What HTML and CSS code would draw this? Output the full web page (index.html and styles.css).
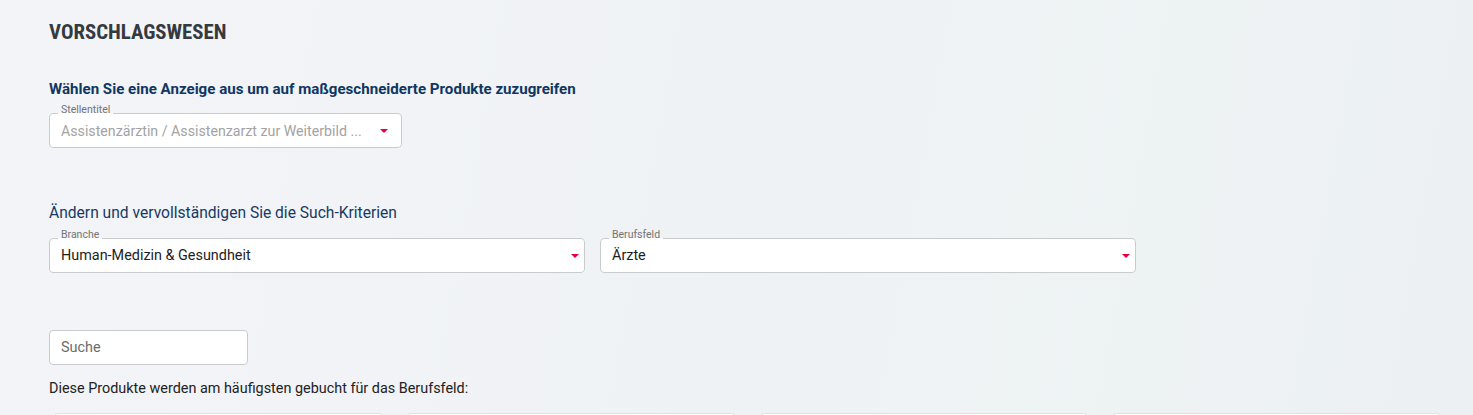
FILE: index.html
```html
<!DOCTYPE html>
<html lang="de">
<head>
<meta charset="utf-8">
<title>Vorschlagswesen</title>
<link rel="stylesheet" href="styles.css">
</head>
<body>
<main class="page">
  <h1 class="title">VORSCHLAGSWESEN</h1>

  <p class="lead">Wählen Sie eine Anzeige aus um auf maßgeschneiderte Produkte zuzugreifen</p>
  <fieldset class="select select-ad">
    <legend class="select-label">Stellentitel</legend>
    <div class="select-row">
      <span class="select-value is-disabled">Assistenzärztin / Assistenzarzt zur Weiterbild ...</span>
      <span class="caret"></span>
    </div>
  </fieldset>

  <p class="sub">Ändern und vervollständigen Sie die Such-Kriterien</p>
  <div class="criteria">
    <fieldset class="select select-wide">
      <legend class="select-label">Branche</legend>
      <div class="select-row">
        <span class="select-value">Human-Medizin &amp; Gesundheit</span>
        <span class="caret"></span>
      </div>
    </fieldset>
    <fieldset class="select select-wide">
      <legend class="select-label">Berufsfeld</legend>
      <div class="select-row">
        <span class="select-value">Ärzte</span>
        <span class="caret"></span>
      </div>
    </fieldset>
  </div>

  <div class="search">
    <input class="search-input" type="text" placeholder="Suche">
  </div>

  <p class="note">Diese Produkte werden am häufigsten gebucht für das Berufsfeld:</p>

  <div class="cards">
    <div class="card"></div>
    <div class="card"></div>
    <div class="card"></div>
    <div class="card"></div>
  </div>
</main>
</body>
</html>
```

FILE: styles.css
```css
html, body {
  margin: 0;
  padding: 0;
}
body {
  font-family: Roboto, "Liberation Sans", Arial, sans-serif;
  font-size: 14px;
  color: #222;
  height: 415px;
  background: linear-gradient(100deg, #f3f4f7 0%, #f1f3f6 30%, #eef2f4 55%, #eef3f4 70%, #ecf0f3 100%);
  overflow: hidden;
}
.page {
  padding: 18px 49px 0 49px;
  height: 415px;
  box-sizing: border-box;
  overflow: hidden;
}
.title {
  margin: 0;
  font-size: 20.8px;
  line-height: 28px;
  font-weight: 700;
  font-stretch: condensed;
  color: #343a40;
}
.lead {
  margin: 34px 0 0 0;
  font-size: 15.1px;
  line-height: 18px;
  font-weight: 700;
  color: #0f3763;
}
.select {
  margin: 0;
  padding: 0 13px 0 11px;
  border: 1px solid #c9cbcd;
  border-radius: 4px;
  background: #fff;
  box-sizing: border-box;
  min-width: 0;
}
.select-label {
  margin-left: -3px;
  padding: 0 3px 6px 3px;
  font-size: 10.5px;
  line-height: 10px;
  color: #757575;
}
.select-ad {
  width: 353px;
  margin-top: 7px;
}
.select-wide {
  padding-right: 5px;
}
.select-row {
  display: flex;
  align-items: center;
  justify-content: space-between;
  height: 19px;
  padding-bottom: 7px;
}
.select-value {
  font-size: 14.4px;
  line-height: 20px;
  color: #1d1d1d;
  white-space: nowrap;
  overflow: hidden;
}
.select-value.is-disabled {
  font-size: 14.2px;
  color: #a3a3a3;
}
.caret {
  flex: none;
  width: 0;
  height: 0;
  border-left: 4px solid transparent;
  border-right: 4px solid transparent;
  border-top: 4px solid #e4003c;
  margin-top: 1px;
}
.sub {
  margin: 56px 0 0 0;
  font-size: 15.6px;
  line-height: 18px;
  color: #173a63;
}
.criteria {
  display: grid;
  grid-template-columns: 536px 536px;
  column-gap: 15px;
  margin-top: 8px;
}
.search {
  margin-top: 57px;
}
.search-input {
  display: block;
  width: 199px;
  height: 35px;
  box-sizing: border-box;
  border: 1px solid #c9cbcd;
  border-radius: 4px;
  background: #fff;
  padding: 0 11px;
  font-family: Roboto, "Liberation Sans", Arial, sans-serif;
  font-size: 14.4px;
  color: #222;
  outline: none;
}
.search-input::placeholder {
  color: #6b6b6b;
}
.note {
  margin: 15px 0 0 0;
  font-size: 14.4px;
  line-height: 18px;
  color: #222;
}
.cards {
  display: grid;
  grid-template-columns: repeat(4, 1fr);
  column-gap: 24px;
  margin: 15px -17px 0 5px;
}
.card {
  height: 120px;
  background: #fff;
  border: 1px solid #dde2e7;
  border-radius: 4px;
}
```
